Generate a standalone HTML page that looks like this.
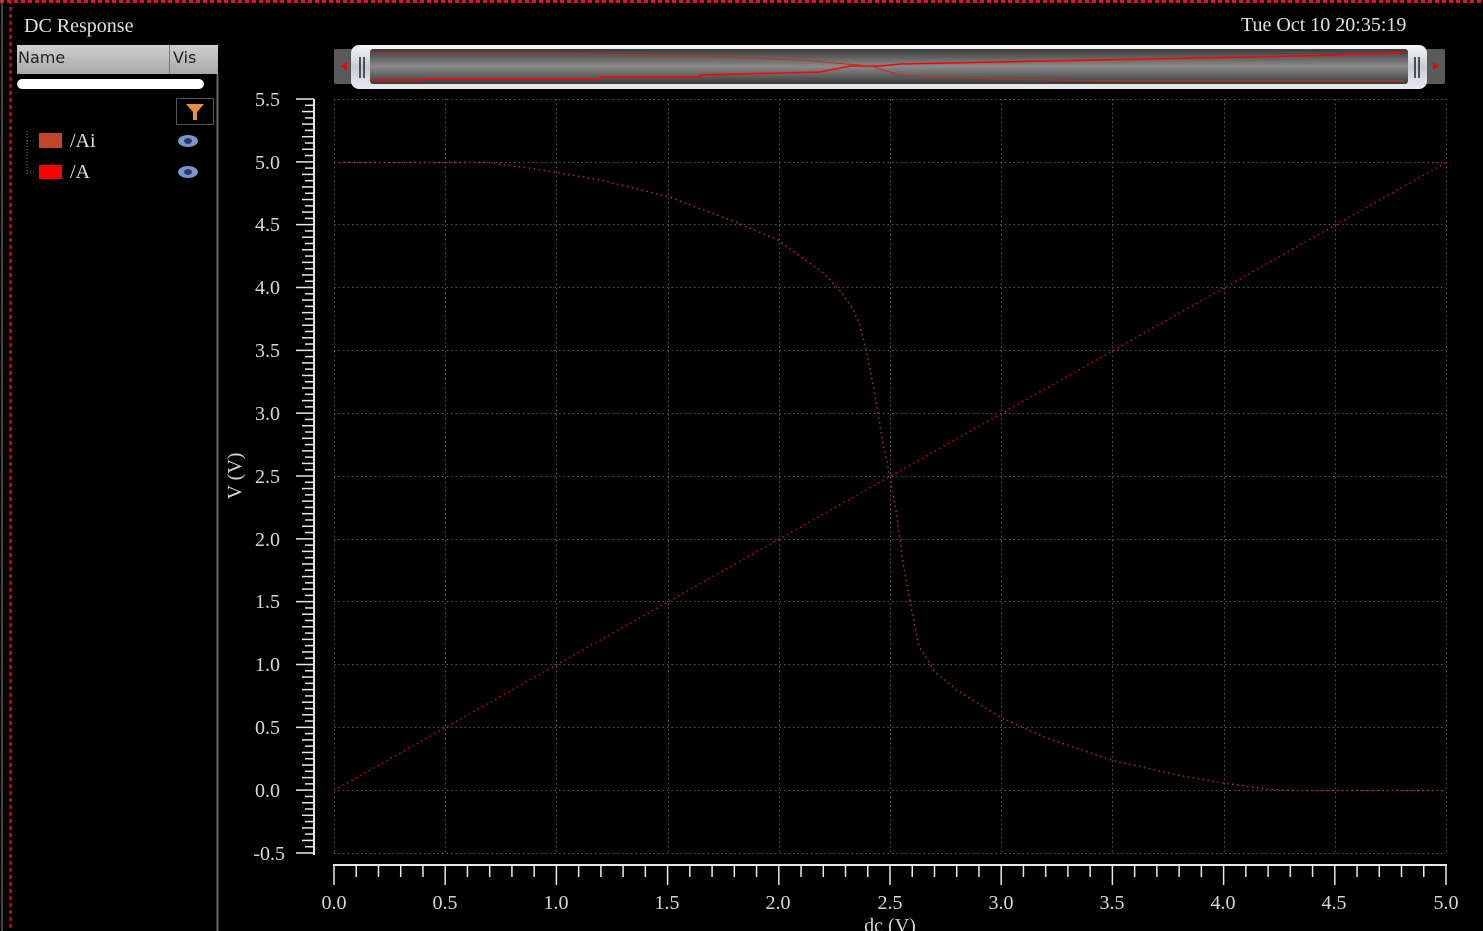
<!DOCTYPE html>
<html><head><meta charset="utf-8"><style>
html,body{margin:0;padding:0;background:#000;width:1483px;height:931px;overflow:hidden;font-family:"Liberation Serif",serif;}
.t{position:absolute;color:#e0e0e0;}
</style></head><body>
<svg width="1483" height="931" style="position:absolute;left:0;top:0" xmlns="http://www.w3.org/2000/svg">
<defs>
<linearGradient id="bar" x1="0" y1="0" x2="0" y2="1">
<stop offset="0" stop-color="#3a3a3a"/><stop offset="0.5" stop-color="#8a8a8a"/><stop offset="1" stop-color="#3a3a3a"/></linearGradient>
<linearGradient id="frame" x1="0" y1="0" x2="0" y2="1">
<stop offset="0" stop-color="#f4f6f8"/><stop offset="0.5" stop-color="#c8ccd2"/><stop offset="1" stop-color="#e8eaee"/></linearGradient>
<linearGradient id="hdr" x1="0" y1="0" x2="0" y2="1">
<stop offset="0" stop-color="#d0d0d0"/><stop offset="1" stop-color="#a8a8a8"/></linearGradient>
</defs>
<line x1="0" y1="1.5" x2="1483" y2="1.5" stroke="#e0102a" stroke-width="3" stroke-dasharray="4 3"/>
<line x1="10.5" y1="0" x2="10.5" y2="931" stroke="#e0102a" stroke-width="2" stroke-dasharray="4 3"/>
<line x1="2" y1="0" x2="2" y2="931" stroke="#888" stroke-width="1"/>
<rect x="17" y="45" width="201" height="29" fill="url(#hdr)"/>
<line x1="169.5" y1="45" x2="169.5" y2="74" stroke="#777"/>
<line x1="217.5" y1="74" x2="217.5" y2="931" stroke="#666" stroke-width="2"/>
<rect x="17" y="79" width="187" height="10" rx="5" fill="#fff"/>
<rect x="176.5" y="98.5" width="37" height="26" fill="#000" stroke="#555"/>
<path d="M186 104 L204 104 L197 112 L197 120 L193 120 L193 112 Z" fill="#e8913a"/>
<path d="M27 131 V174 M27 141 H36 M27 172 H36" stroke="#777" stroke-dasharray="1 2" fill="none"/>
<rect x="39" y="133" width="23" height="15" fill="#c0452a"/>
<rect x="39" y="165" width="23" height="14" fill="#ff0000"/>
<ellipse cx="188" cy="141" rx="10" ry="6" fill="#7a96c8"/><ellipse cx="188" cy="141" rx="4" ry="3" fill="#2a3a70"/>
<ellipse cx="188" cy="172" rx="10" ry="6" fill="#7a96c8"/><ellipse cx="188" cy="172" rx="4" ry="3" fill="#2a3a70"/>
<rect x="334" y="49" width="1111" height="35" fill="#5a5a5a" rx="2"/>
<path d="M341 66 L347 62 L347 70 Z" fill="#e00"/><path d="M1439 66 L1433 62 L1433 70 Z" fill="#e00"/>
<rect x="351" y="45" width="1076" height="44" rx="8" fill="url(#frame)"/>
<rect x="370" y="49" width="1038" height="35" rx="3" fill="url(#bar)"/>
<path d="M372 80 L420 80 L420 79 L600 79 L600 77 L700 77 L700 75 L820 72 L850 66 L880 66 L900 64 L1000 62 L1100 60 L1200 58 L1300 56 L1404 53" stroke="#f00" stroke-width="1.5" fill="none"/>
<path d="M372 53 L560 53 L600 54 L700 56 L800 60 L870 66 L900 75 L950 78 L1050 80 L1150 81 L1404 81" stroke="#c03020" stroke-width="1" fill="none"/>
<path d="M360 57 V78 M364 57 V78 M1415 57 V78 M1419 57 V78" stroke="#222" stroke-width="1.5"/>
<g stroke="#5a5a5a" stroke-width="1" stroke-dasharray="1.5 3">
<line x1="334" y1="99.5" x2="1446" y2="99.5"/><line x1="334" y1="162.5" x2="1446" y2="162.5"/>
<line x1="334" y1="224.5" x2="1446" y2="224.5"/><line x1="334" y1="287.5" x2="1446" y2="287.5"/>
<line x1="334" y1="350.5" x2="1446" y2="350.5"/><line x1="334" y1="413.5" x2="1446" y2="413.5"/>
<line x1="334" y1="476.5" x2="1446" y2="476.5"/><line x1="334" y1="539.5" x2="1446" y2="539.5"/>
<line x1="334" y1="601.5" x2="1446" y2="601.5"/><line x1="334" y1="664.5" x2="1446" y2="664.5"/>
<line x1="334" y1="727.5" x2="1446" y2="727.5"/><line x1="334" y1="790.5" x2="1446" y2="790.5"/>
<line x1="334" y1="853.5" x2="1446" y2="853.5"/>
<line x1="334.5" y1="99" x2="334.5" y2="853"/><line x1="445.5" y1="99" x2="445.5" y2="853"/>
<line x1="556.5" y1="99" x2="556.5" y2="853"/><line x1="668.5" y1="99" x2="668.5" y2="853"/>
<line x1="779.5" y1="99" x2="779.5" y2="853"/><line x1="890.5" y1="99" x2="890.5" y2="853"/>
<line x1="1001.5" y1="99" x2="1001.5" y2="853"/><line x1="1112.5" y1="99" x2="1112.5" y2="853"/>
<line x1="1224.5" y1="99" x2="1224.5" y2="853"/><line x1="1335.5" y1="99" x2="1335.5" y2="853"/>
<line x1="1446.5" y1="99" x2="1446.5" y2="853"/>
</g>
<polyline points="334,790.5 1446,162.5" stroke="#d01010" stroke-width="1.5" stroke-dasharray="1.5 3.5" fill="none"/>
<polyline points="334,162.5 489.7,162.5 534.2,168.8 600.9,180.1 667.6,196.4 734.3,221.5 778.8,240.4 823.3,273 840,290.6 852.2,308 860,325 867.8,357.2 876,401.1 883.3,445.1 890,476.5 896.7,514.2 903.3,564.4 910,602.1 918.9,646.1 934.5,671.2 956.7,690 1001.2,717.7 1045.7,737.7 1112.4,760.4 1179.1,775.4 1223.6,783 1268.1,789.2 1290.3,790.5 1446,790.5" stroke="#b8321e" stroke-width="1.5" stroke-dasharray="1.5 3.5" fill="none"/>
<line x1="314" y1="99" x2="314" y2="855" stroke="#e8e8e8" stroke-width="2"/>
<g stroke="#e8e8e8" stroke-width="1.5" id="yticks"></g>
<g stroke="#e8e8e8" stroke-width="1.5" id="xticks"></g>
<g fill="#d8d8d8" font-family="Liberation Serif, serif" font-size="20" text-anchor="end">
<text x="280" y="106">5.5</text><text x="280" y="169">5.0</text><text x="280" y="231">4.5</text>
<text x="280" y="294">4.0</text><text x="280" y="357">3.5</text><text x="280" y="420">3.0</text>
<text x="280" y="483">2.5</text><text x="280" y="546">2.0</text><text x="280" y="608">1.5</text>
<text x="280" y="671">1.0</text><text x="280" y="734">0.5</text><text x="280" y="797">0.0</text>
<text x="285" y="860">-0.5</text>
</g>
<g fill="#d8d8d8" font-family="Liberation Serif, serif" font-size="20" text-anchor="middle">
<text x="334" y="909">0.0</text><text x="445" y="909">0.5</text><text x="556" y="909">1.0</text>
<text x="667" y="909">1.5</text><text x="778" y="909">2.0</text><text x="890" y="909">2.5</text>
<text x="1001" y="909">3.0</text><text x="1112" y="909">3.5</text><text x="1223" y="909">4.0</text>
<text x="1334" y="909">4.5</text><text x="1446" y="909">5.0</text>
<text x="890" y="932">dc (V)</text>
<text transform="translate(241,476) rotate(-90)">V (V)</text>
</g>
<line x1="333" y1="865" x2="1447" y2="865" stroke="#e8e8e8" stroke-width="2"/>
</svg>
<div class="t" style="left:24px;top:15px;font-size:20px;">DC Response</div>
<div class="t" style="left:1241px;top:14px;font-size:20px;">Tue Oct 10 20:35:19</div>
<div class="t" style="left:18px;top:48px;font-size:16px;color:#222;font-family:'DejaVu Sans',sans-serif;">Name</div>
<div class="t" style="left:173px;top:48px;font-size:16px;color:#222;font-family:'DejaVu Sans',sans-serif;">Vis</div>
<div class="t" style="left:70px;top:130px;font-size:20px;">/Ai</div>
<div class="t" style="left:70px;top:161px;font-size:20px;">/A</div>
<script>
var ns="http://www.w3.org/2000/svg";
var yg=document.getElementById("yticks");
for(var i=0;i<=120;i++){var y=99+i*(754/120);var len=(i%10==0)?18:(i%2==0?12:9);
var l=document.createElementNS(ns,"line");l.setAttribute("x1",314-len);l.setAttribute("x2",314);l.setAttribute("y1",y);l.setAttribute("y2",y);yg.appendChild(l);}
var xg=document.getElementById("xticks");
for(var i=0;i<=50;i++){var x=334+i*(1112/50);var len=(i%5==0)?20:12;
var l=document.createElementNS(ns,"line");l.setAttribute("x1",x);l.setAttribute("x2",x);l.setAttribute("y1",865);l.setAttribute("y2",865+len);xg.appendChild(l);}
</script>
</body></html>
